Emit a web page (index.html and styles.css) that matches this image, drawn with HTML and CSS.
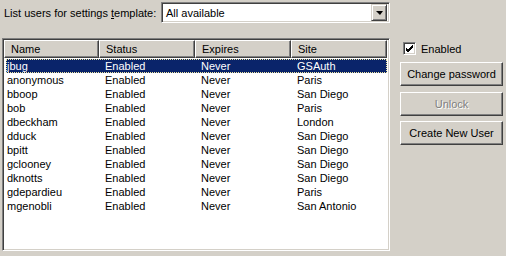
FILE: index.html
```html
<!DOCTYPE html>
<html>
<head>
<meta charset="utf-8">
<link rel="stylesheet" href="styles.css">
</head>
<body>
<div class="page">
  <div class="main">
    <div class="toprow">
      <span class="label">List users for settings <u>t</u>emplate:</span>
      <div class="combo">
        <span class="combo-text">All available</span>
        <span class="combo-btn"><span class="arrow"></span></span>
      </div>
    </div>
    <div class="listview">
      <div class="header">
        <div class="hcell c1">Name</div>
        <div class="hcell c2">Status</div>
        <div class="hcell c3">Expires</div>
        <div class="hcell c4">Site</div>
      </div>
      <div class="rows">
        <div class="row selected"><span class="cell c1">jbug</span><span class="cell c2">Enabled</span><span class="cell c3">Never</span><span class="cell c4">GSAuth</span></div>
        <div class="row"><span class="cell c1">anonymous</span><span class="cell c2">Enabled</span><span class="cell c3">Never</span><span class="cell c4">Paris</span></div>
        <div class="row"><span class="cell c1">bboop</span><span class="cell c2">Enabled</span><span class="cell c3">Never</span><span class="cell c4">San Diego</span></div>
        <div class="row"><span class="cell c1">bob</span><span class="cell c2">Enabled</span><span class="cell c3">Never</span><span class="cell c4">Paris</span></div>
        <div class="row"><span class="cell c1">dbeckham</span><span class="cell c2">Enabled</span><span class="cell c3">Never</span><span class="cell c4">London</span></div>
        <div class="row"><span class="cell c1">dduck</span><span class="cell c2">Enabled</span><span class="cell c3">Never</span><span class="cell c4">San Diego</span></div>
        <div class="row"><span class="cell c1">bpitt</span><span class="cell c2">Enabled</span><span class="cell c3">Never</span><span class="cell c4">San Diego</span></div>
        <div class="row"><span class="cell c1">gclooney</span><span class="cell c2">Enabled</span><span class="cell c3">Never</span><span class="cell c4">San Diego</span></div>
        <div class="row"><span class="cell c1">dknotts</span><span class="cell c2">Enabled</span><span class="cell c3">Never</span><span class="cell c4">San Diego</span></div>
        <div class="row"><span class="cell c1">gdepardieu</span><span class="cell c2">Enabled</span><span class="cell c3">Never</span><span class="cell c4">Paris</span></div>
        <div class="row"><span class="cell c1">mgenobli</span><span class="cell c2">Enabled</span><span class="cell c3">Never</span><span class="cell c4">San Antonio</span></div>
      </div>
    </div>
  </div>
  <div class="side">
    <label class="check">
      <span class="box">
        <svg width="9" height="9" viewBox="0 0 9 9"><path d="M1 4 L3 6 L8 1 M1 5 L3 7 L8 2 M1 6 L3 8 L8 3" stroke="#000" stroke-width="1" fill="none" shape-rendering="crispEdges"/></svg>
      </span>
      <span>Enabled</span>
    </label>
    <button class="btn b1">Change password</button>
    <button class="btn b2 disabled">Unlock</button>
    <button class="btn b3">Create New User</button>
  </div>
</div>
</body>
</html>
```
FILE: styles.css
```css
* { box-sizing: border-box; }
html, body {
  margin: 0;
  padding: 0;
  background: #d4d0c8;
  width: 506px;
  height: 256px;
  overflow: hidden;
}
body {
  font-family: "Liberation Sans", Arial, sans-serif;
  font-size: 11px;
  color: #000;
}
.page {
  display: flex;
  padding: 2px 0 0 2px;
}
.main {
  width: 388px;
  display: flex;
  flex-direction: column;
}
.toprow {
  display: flex;
  align-items: center;
  height: 21px;
}
.label {
  padding-left: 2px;
  width: 159px;
}
.label u { text-decoration: underline; }
.combo {
  width: 229px;
  height: 21px;
  background: #fff;
  border-top: 1px solid #808080;
  border-left: 1px solid #808080;
  border-right: 1px solid #fff;
  border-bottom: 1px solid #fff;
  box-shadow: inset 1px 1px 0 #404040, inset -1px -1px 0 #d4d0c8;
  display: flex;
  align-items: center;
  padding: 2px;
}
.combo-text {
  flex: 1;
  padding-left: 2px;
}
.combo-btn {
  width: 16px;
  height: 17px;
  background: #d4d0c8;
  border-top: 1px solid #d4d0c8;
  border-left: 1px solid #d4d0c8;
  border-right: 1px solid #404040;
  border-bottom: 1px solid #404040;
  box-shadow: inset 1px 1px 0 #fff, inset -1px -1px 0 #808080;
  display: flex;
  align-items: center;
  justify-content: center;
}
.arrow {
  width: 0;
  height: 0;
  border-left: 4px solid transparent;
  border-right: 3px solid transparent;
  border-top: 4px solid #000;
  margin-top: 1px;
}
.listview {
  margin-top: 15px;
  height: 213px;
  background: #fff;
  border-top: 1px solid #808080;
  border-left: 1px solid #808080;
  border-right: 1px solid #fff;
  border-bottom: 1px solid #fff;
  box-shadow: inset 1px 1px 0 #404040, inset -1px -1px 0 #d4d0c8;
  padding: 1px 2px 1px 1px;
  overflow: hidden;
}
.header {
  display: flex;
  height: 18px;
  background: #d4d0c8;
}
.hcell {
  height: 18px;
  border-top: 1px solid #fff;
  border-left: 1px solid #fff;
  border-right: 1px solid #404040;
  border-bottom: 1px solid #404040;
  box-shadow: inset -1px -1px 0 #808080;
  padding-left: 6px;
  padding-top: 1px;
  line-height: 14px;
  white-space: nowrap;
}
.header .c1 { width: 95px; }
.header .c2, .header .c3, .header .c4 { width: 96px; }
.rows {
  display: flex;
  flex-direction: column;
  padding-top: 1px;
}
.row {
  display: flex;
  height: 14px;
  line-height: 15px;
  margin-left: 2px;
  width: 381px;
}
.row.selected {
  background: #0a246a;
  color: #fff;
  outline: 1px dotted #f0e6a0;
  outline-offset: -1px;
}
.cell { white-space: nowrap; }
.row .c1 { width: 93px; padding-left: 1px; }
.row .c2 { width: 96px; padding-left: 6px; }
.row .c3 { width: 96px; padding-left: 6px; }
.row .c4 { width: 96px; padding-left: 6px; }
.side {
  margin-left: 10px;
  padding-top: 40px;
  display: flex;
  flex-direction: column;
  width: 103px;
}
.check {
  display: flex;
  align-items: center;
  height: 13px;
  padding-left: 3px;
  gap: 5px;
}
.box {
  width: 13px;
  height: 13px;
  background: #fff;
  border-top: 1px solid #808080;
  border-left: 1px solid #808080;
  border-right: 1px solid #fff;
  border-bottom: 1px solid #fff;
  box-shadow: inset 1px 1px 0 #404040, inset -1px -1px 0 #d4d0c8;
  display: flex;
  align-items: center;
  justify-content: center;
}
.box svg { display: block; }
.btn {
  font-family: "Liberation Sans", Arial, sans-serif;
  font-size: 11px;
  color: #000;
  width: 103px;
  height: 24px;
  background: #d4d0c8;
  border-top: 1px solid #fff;
  border-left: 1px solid #fff;
  border-right: 1px solid #404040;
  border-bottom: 1px solid #404040;
  box-shadow: inset -1px -1px 0 #808080;
  padding: 0;
  margin: 0;
}
.b1 { margin-top: 7px; }
.b2 { margin-top: 6px; }
.b3 { margin-top: 5px; }
.btn.disabled {
  color: #808080;
  text-shadow: 1px 1px 0 #fff;
}
```
